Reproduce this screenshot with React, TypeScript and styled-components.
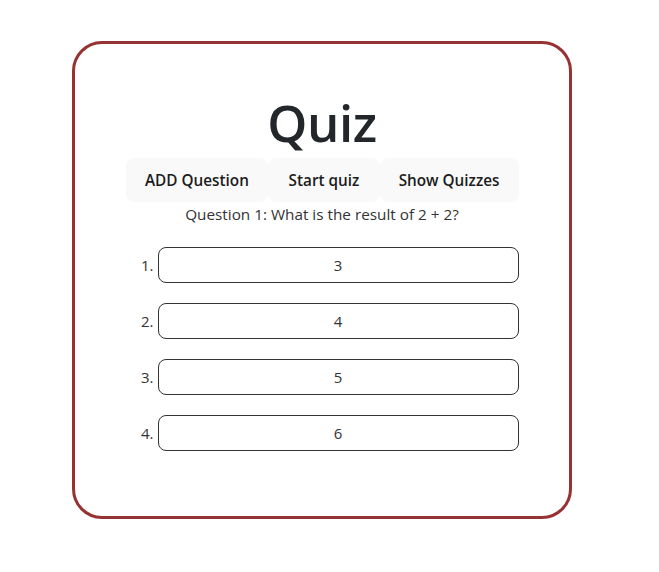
import styled, { createGlobalStyle } from 'styled-components';

const GlobalStyle = createGlobalStyle`
  html, body {
    margin: 0;
    padding: 0;
    background: #ffffff;
  }
  body {
    font-family: "Open Sans", "Noto Sans", sans-serif;
    color: #222;
  }
`;

const Page = styled.div`
  width: 659px;
  height: 572px;
  box-sizing: border-box;
  padding: 41px 87px 0 72px;
`;

const Card = styled.div`
  box-sizing: border-box;
  width: 500px;
  height: 478px;
  border: 3px solid #963232;
  border-radius: 30px;
  padding-top: 50px;
  display: flex;
  flex-direction: column;
  align-items: center;
`;

const Title = styled.h1`
  margin: 0;
  font-size: 51px;
  line-height: 57px;
  font-weight: 600;
  color: #23262b;
  letter-spacing: -0.4px;
`;

const Toolbar = styled.div`
  margin-top: 7px;
  display: flex;
  width: 393px;
`;

const NavButton = styled.button<{ $grow: number }>`
  flex: ${(p) => p.$grow} 1 0;
  height: 44px;
  padding: 0;
  border: 1px solid transparent;
  border-radius: 8px;
  background: #f9f9f9;
  font-family: inherit;
  font-size: 15.3px;
  font-weight: 600;
  color: #1c1c1c;
  cursor: pointer;
`;

const Question = styled.p`
  margin: 1px 0 0;
  font-size: 15.3px;
  line-height: 22.5px;
  color: #333;
`;

const Options = styled.ol`
  list-style: none;
  margin: 21px 0 0;
  padding: 0;
  width: 393px;
  display: flex;
  flex-direction: column;
  gap: 20px;
`;

const OptionRow = styled.li`
  display: grid;
  grid-template-columns: 32px 1fr;
  align-items: center;
`;

const Num = styled.span`
  text-align: right;
  padding-right: 4px;
  font-size: 15px;
  color: #333;
`;

const OptionBox = styled.button`
  height: 36px;
  border: 1px solid #333;
  border-radius: 8px;
  background: #fff;
  font-family: inherit;
  font-size: 15px;
  color: #333;
  cursor: pointer;
`;

const answers = ['3', '4', '5', '6'];

export default function App() {
  return (
    <>
      <GlobalStyle />
      <Page>
        <Card>
          <Title>Quiz</Title>
          <Toolbar>
            <NavButton $grow={143}>ADD Question</NavButton>
            <NavButton $grow={111}>Start quiz</NavButton>
            <NavButton $grow={139}>Show Quizzes</NavButton>
          </Toolbar>
          <Question>Question 1: What is the result of 2 + 2?</Question>
          <Options>
            {answers.map((a, i) => (
              <OptionRow key={a}>
                <Num>{i + 1}.</Num>
                <OptionBox>{a}</OptionBox>
              </OptionRow>
            ))}
          </Options>
        </Card>
      </Page>
    </>
  );
}
